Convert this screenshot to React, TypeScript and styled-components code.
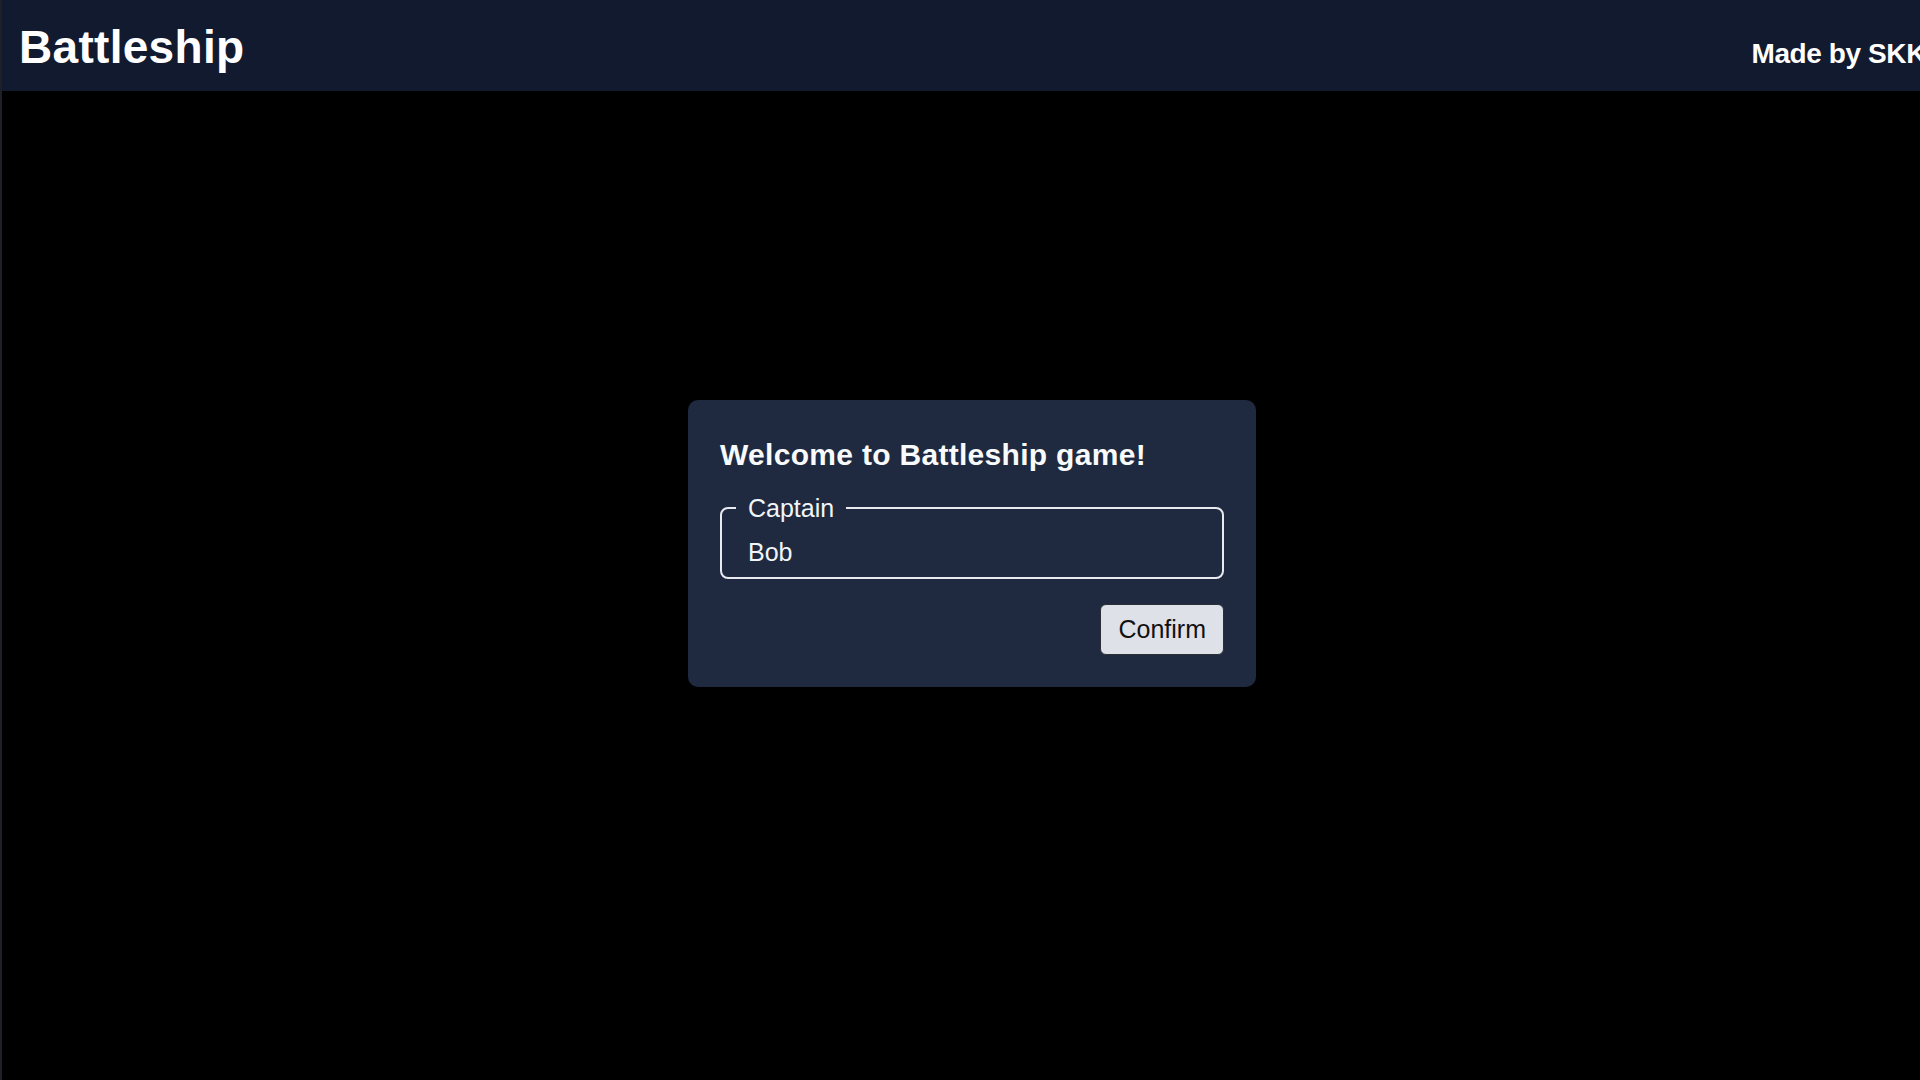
import React, { useState } from "react";
import styled, { createGlobalStyle } from "styled-components";

const GlobalStyle = createGlobalStyle`
  html, body {
    margin: 0;
    padding: 0;
    background: #000000;
    overflow: hidden;
  }
  body {
    font-family: "Liberation Sans", Arial, Helvetica, sans-serif;
    color: #f8fafc;
  }
  * { box-sizing: border-box; }
`;

const Page = styled.div`
  min-height: 100vh;
  width: calc(100% + 24px);
  background: #000000;
  border-left: 2px solid #1d2026;
  display: flex;
  flex-direction: column;
`;

const Header = styled.header`
  height: 91px;
  padding: 20px 18px 0 17px;
  background: #111a2f;
  display: flex;
  align-items: baseline;
  justify-content: space-between;
`;

const Brand = styled.h1`
  margin: 0;
  font-size: 46px;
  font-weight: 700;
  color: #ffffff;
  letter-spacing: 0.3px;
`;

const Credit = styled.span`
  font-size: 28px;
  font-weight: 700;
  color: #ffffff;
  white-space: nowrap;
  letter-spacing: -0.4px;
`;

const Main = styled.main`
  flex: 1;
`;

const Overlay = styled.div`
  position: fixed;
  top: 0;
  left: 0;
  right: -24px;
  bottom: -6px;
  display: grid;
  place-items: center;
`;

const Dialog = styled.form`
  width: 568px;
  padding: 37px 32px 32px 32px;
  background: #1f2a40;
  border-radius: 10px;
  display: flex;
  flex-direction: column;
`;

const Title = styled.h2`
  margin: 0 0 21px;
  font-size: 30px;
  line-height: 36px;
  font-weight: 700;
  color: #f8fafc;
  letter-spacing: 0.3px;
`;

const Field = styled.fieldset`
  margin: 0;
  padding: 0 14px;
  border: 2px solid #e8eaef;
  border-radius: 8px;
  min-width: 0;
`;

const Legend = styled.legend`
  padding: 0 12px;
  font-size: 25px;
  color: #f1f5f9;
`;

const NameInput = styled.input`
  display: block;
  width: 100%;
  padding: 15px 12px 10px;
  border: none;
  outline: none;
  background: transparent;
  color: #f1f5f9;
  font-family: "Liberation Sans", Arial, sans-serif;
  font-size: 25px;
  line-height: 29px;
`;

const Actions = styled.div`
  display: flex;
  justify-content: flex-end;
  margin-top: 25px;
`;

const ConfirmButton = styled.button`
  height: 51px;
  padding: 0 17px;
  background: #dfe1e8;
  color: #111111;
  border: 1px solid #2b2f36;
  border-radius: 6px;
  font-family: "Liberation Sans", Arial, sans-serif;
  font-size: 25px;
  line-height: 29px;
  cursor: pointer;
`;

export default function App() {
  const [name, setName] = useState("Bob");
  return (
    <>
      <GlobalStyle />
      <Page>
        <Header>
          <Brand>Battleship</Brand>
          <Credit>Made by SKK</Credit>
        </Header>
        <Main />
      </Page>
      <Overlay>
        <Dialog onSubmit={(e) => e.preventDefault()}>
          <Title>Welcome to Battleship game!</Title>
          <Field>
            <Legend>Captain</Legend>
            <NameInput value={name} onChange={(e) => setName(e.target.value)} />
          </Field>
          <Actions>
            <ConfirmButton type="submit">Confirm</ConfirmButton>
          </Actions>
        </Dialog>
      </Overlay>
    </>
  );
}
